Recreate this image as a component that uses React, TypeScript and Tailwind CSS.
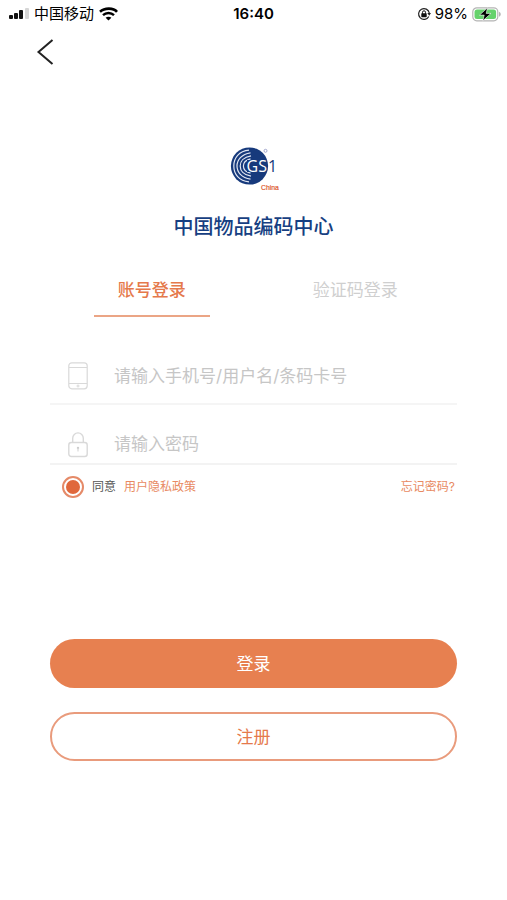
import { useState } from "react";

function StatusBar() {
  return (
    <div className="grid h-7 grid-cols-3 items-center px-1.5 text-[15px] leading-5 text-black">
      <div className="flex items-center gap-1 whitespace-nowrap">
        <svg width="24" height="12" viewBox="0 0 24 12" aria-hidden="true">
          <rect x="3" y="7" width="4" height="4" rx="1" fill="#111" />
          <rect x="8" y="5" width="4" height="6" rx="1" fill="#111" />
          <rect x="13" y="2" width="4" height="9" rx="1" fill="#111" />
          <rect x="19" y="0" width="4" height="11" rx="1" fill="#d6d6d6" />
        </svg>
        <span>中国移动</span>
        <svg width="20" height="14" viewBox="0 0 20 14" fill="none" aria-hidden="true">
          <path d="M2 4.800C6.500 .6 15.500 .6 19 4.800" stroke="#000" strokeWidth="2.600" />
          <path d="M5 8.100C8 5.200 13 5.200 16 8.100" stroke="#000" strokeWidth="2.400" />
          <path d="M7.600 10.700C9.200 9.300 11.800 9.300 13.400 10.700L10.500 13.500Z" fill="#000" />
        </svg>
      </div>
      <span className="text-center font-semibold">16:40</span>
      <div className="flex items-center justify-end gap-1">
        <svg width="14" height="14" viewBox="0 0 14 14" fill="none" aria-hidden="true">
          <path d="M11.800 9.500A5.400 5.400 0 1 1 12.300 6" stroke="#222" strokeWidth="1.200" />
          <path d="M10.300 6H14L12.200 8.800Z" fill="#222" />
          <rect x="4.300" y="6.200" width="5.400" height="4" rx=".6" fill="#111" />
          <path d="M5.500 6.800V5.300A1.500 1.500 0 0 1 8.500 5.300V6.800" stroke="#111" />
        </svg>
        <span>98%</span>
        <svg width="29" height="15" viewBox="0 0 29 15" fill="none" aria-hidden="true">
          <rect x=".8" y=".8" width="25" height="13" rx="4" stroke="#b4b4b4" strokeWidth="1.200" />
          <rect x="2.500" y="2.500" width="21.600" height="9.600" rx="2.500" fill="#65d26c" />
          <path d="M27 4.800C29.300 5.800 29.300 8.800 27 9.800Z" fill="#b4b4b4" />
          <path d="M15.500 .8L7.500 8.100H12.200L10.800 13.800L19 6.400H14.200Z" fill="#000" stroke="#fff" strokeWidth=".6" />
        </svg>
      </div>
    </div>
  );
}

function Logo() {
  return (
    <svg width="50" height="48" viewBox="0 0 50 48" fill="none" role="img" aria-label="GS1 China">
      <circle cx="20.500" cy="20" r="18.600" fill="#173a7c" />
      <g stroke="#e3e8f3" strokeWidth="1.200">
        <path d="M20 4.200C10 5 4.800 12 4.800 20S10 35 20 35.800" />
        <path d="M21.500 6.800C12.500 8 8 14 8 20S12.500 32 21.500 33.200" />
        <path d="M22 9.800C14.500 11 11.200 15.500 11.200 20S14.500 29 22 30.200" />
        <path d="M21.500 12.800C16.500 14 14.400 17 14.400 20S16.500 26 21.500 27.200" />
      </g>
      <rect x="18" y="14" width="20" height="12" fill="#173a7c" />
      <text x="17.500" y="26" fontFamily="Open Sans, sans-serif" fontSize="16" fontWeight="500" fill="#fff">
        GS
      </text>
      <text x="39" y="26" fontFamily="Open Sans, sans-serif" fontSize="16" fontWeight="500" fill="#173a7c">
        1
      </text>
      <circle cx="36.500" cy="4.800" r="1.500" stroke="#a0a5cc" />
      <text x="32" y="44" fontFamily="Liberation Sans, sans-serif" fontSize="6.800" fill="#dd5a30" stroke="#dd5a30" strokeWidth=".2">
        China
      </text>
    </svg>
  );
}

function PhoneIcon() {
  return (
    <svg width="20" height="28" viewBox="0 0 20 28" fill="none" stroke="#d9d9d9" aria-hidden="true">
      <rect x=".8" y=".8" width="18.400" height="26" rx="3" strokeWidth="1.200" />
      <path d="M1 5.500H19M1 21.500H19" strokeWidth="1.200" />
      <circle cx="10" cy="24" r="1" />
    </svg>
  );
}

function LockIcon() {
  return (
    <svg width="20" height="28" viewBox="0 0 20 28" fill="none" stroke="#d9d9d9" aria-hidden="true">
      <rect x=".8" y="12.500" width="18.400" height="14" rx="2.500" strokeWidth="1.400" />
      <path d="M4.700 12.500V8.200A5.300 5.300 0 0 1 15.300 8.200V12.500" strokeWidth="1.400" />
      <circle cx="10" cy="18" r="1.200" fill="#ccc" stroke="none" />
      <path d="M10 18V21.500" strokeWidth="1.200" />
    </svg>
  );
}

const tabs = ["账号登录", "验证码登录"];

export default function App() {
  const [tab, setTab] = useState(0);

  return (
    <div className="min-h-dvh bg-white font-[Inter,'Noto_Sans_CJK_SC',sans-serif]">
      <StatusBar />
      <header className="flex h-12 items-center px-9">
        <button type="button" aria-label="返回">
          <svg width="18" height="28" viewBox="0 0 18 28" fill="none" aria-hidden="true">
            <path d="M16.500 2L2.500 14L16.500 26" stroke="#222" strokeWidth="2" />
          </svg>
        </button>
      </header>

      <main className="px-12">
        <div className="flex flex-col items-center pt-[70px]">
          <Logo />
          <h1 className="mt-[18px] text-[20px] leading-[30px] font-medium text-[#173f82]">中国物品编码中心</h1>
        </div>

        <div role="tablist" className="mt-7 grid grid-cols-2 px-0.5 text-[17px] leading-6">
          {tabs.map((name, i) => (
            <div key={name} className="flex justify-center">
              <button
                type="button"
                role="tab"
                aria-selected={tab === i}
                onClick={() => setTab(i)}
                className={
                  tab === i
                    ? "h-[47px] w-[116px] border-b-2 border-[#eba585] pt-1 pb-2.5 font-medium text-[#e5794b]"
                    : "h-[47px] w-[116px] border-b-2 border-transparent pt-1 pb-2.5 text-[#cfcfcf]"
                }
              >
                {name}
              </button>
            </div>
          ))}
        </div>

        <form className="px-0.5" onSubmit={(e) => e.preventDefault()}>
          <label className="mt-8 flex h-14 items-center gap-[26px] border-b-2 border-[#f5f5f5] pl-[18px]">
            <PhoneIcon />
            <input
              type="text"
              aria-label="账号"
              placeholder="请输入手机号/用户名/条码卡号"
              className="min-w-0 flex-1 text-[17px] leading-6 outline-none placeholder:text-[#c6c6c6]"
            />
          </label>
          <label className="mt-5 flex h-10 items-center gap-[26px] border-b-2 border-[#f3f3f3] pl-[18px]">
            <LockIcon />
            <input
              type="password"
              aria-label="密码"
              placeholder="请输入密码"
              className="min-w-0 flex-1 text-[17px] leading-6 outline-none placeholder:text-[#c6c6c6]"
            />
          </label>

          <div className="flex h-11 items-center pr-0.5 pl-3 text-[12px] leading-5">
            <input
              id="agree"
              type="radio"
              defaultChecked
              className="size-[22px] appearance-none rounded-full border-2 border-[#e58a68] bg-clip-content p-[2px] checked:bg-[#e0683c]"
            />
            <label htmlFor="agree" className="ml-2 text-[#555]">同意</label>
            <a href="#privacy" className="ml-2 text-[#e88a62]">用户隐私政策</a>
            <a href="#forgot" className="ml-auto text-[#e88a62]">忘记密码?</a>
          </div>

          <div className="mt-[130px] flex flex-col gap-6 pb-8 text-[17px] leading-6">
            <button type="submit" className="h-[49px] rounded-full bg-[#e78050] text-white">登录</button>
            <button type="button" className="h-[49px] rounded-full border-2 border-[#e99b7c] text-[#e5794b]">注册</button>
          </div>
        </form>
      </main>
    </div>
  );
}
